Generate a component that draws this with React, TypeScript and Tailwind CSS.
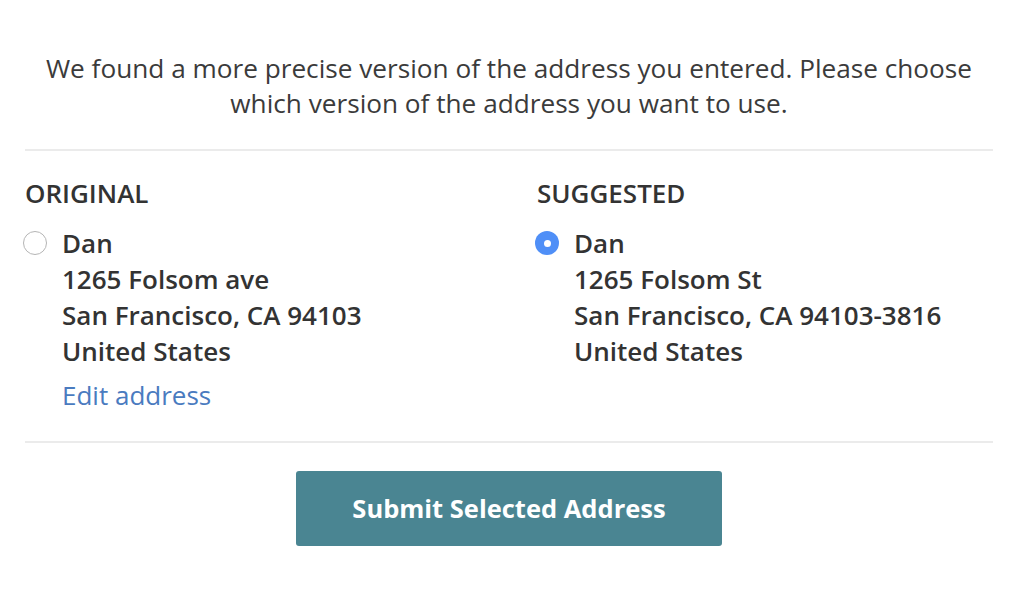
import { useState } from "react";

const addresses = [
  {
    key: "original",
    label: "Original",
    lines: ["Dan", "1265 Folsom ave", "San Francisco, CA 94103", "United States"],
    editable: true,
  },
  {
    key: "suggested",
    label: "Suggested",
    lines: ["Dan", "1265 Folsom St", "San Francisco, CA 94103-3816", "United States"],
    editable: false,
  },
];

function Radio({ checked }: { checked: boolean }) {
  return checked ? (
    <span className="-ml-[2px] mt-[6px] flex h-[24px] w-[24px] shrink-0 items-center justify-center rounded-full bg-[#4f8ff7]">
      <span className="h-[7px] w-[7px] rounded-full bg-white" />
    </span>
  ) : (
    <span className="-ml-[2px] mt-[6px] h-[24px] w-[24px] shrink-0 rounded-full border border-[#b5b5b5] bg-white" />
  );
}

export default function App() {
  const [selected, setSelected] = useState("suggested");

  return (
    <div
      className="min-h-screen bg-white pl-[25px] pr-[31px] pt-[51px] text-[#333]"
      style={{ fontFamily: '"Open Sans", "Liberation Sans", sans-serif' }}
    >
      <p className="mx-auto whitespace-nowrap text-center text-[26.2px] leading-[35px] text-[#3b3b3b]">
        We found a more precise version of the address you entered. Please choose
        <br />
        which version of the address you want to use.
      </p>

      <div className="mt-[28px] border-t-2 border-[#ebebeb]" />

      <div className="grid grid-cols-2 gap-x-[56px] pt-[27px]">
        {addresses.map((a) => (
          <div key={a.key}>
            <h3 className="text-[26px] font-semibold uppercase leading-[30px] text-[#333]">
              {a.label}
            </h3>
            <label
              className="mt-[17px] flex cursor-pointer gap-[15px]"
              onClick={() => setSelected(a.key)}
            >
              <Radio checked={selected === a.key} />
              <div className="whitespace-nowrap text-[26px] font-semibold leading-[36px] text-[#333]">
                {a.lines.map((line) => (
                  <div key={line}>{line}</div>
                ))}
                {a.editable && (
                  <a
                    href="#"
                    className="mt-[8px] block font-normal text-[#4a7bbf]"
                  >
                    Edit address
                  </a>
                )}
              </div>
            </label>
          </div>
        ))}
      </div>

      <div className="mt-[28px] border-t-2 border-[#ebebeb]" />

      <div className="flex justify-center pt-[28px]">
        <button className="h-[75px] w-[426px] rounded-[3px] bg-[#4a8592] text-[25.5px] font-bold text-white">
          Submit Selected Address
        </button>
      </div>
    </div>
  );
}
